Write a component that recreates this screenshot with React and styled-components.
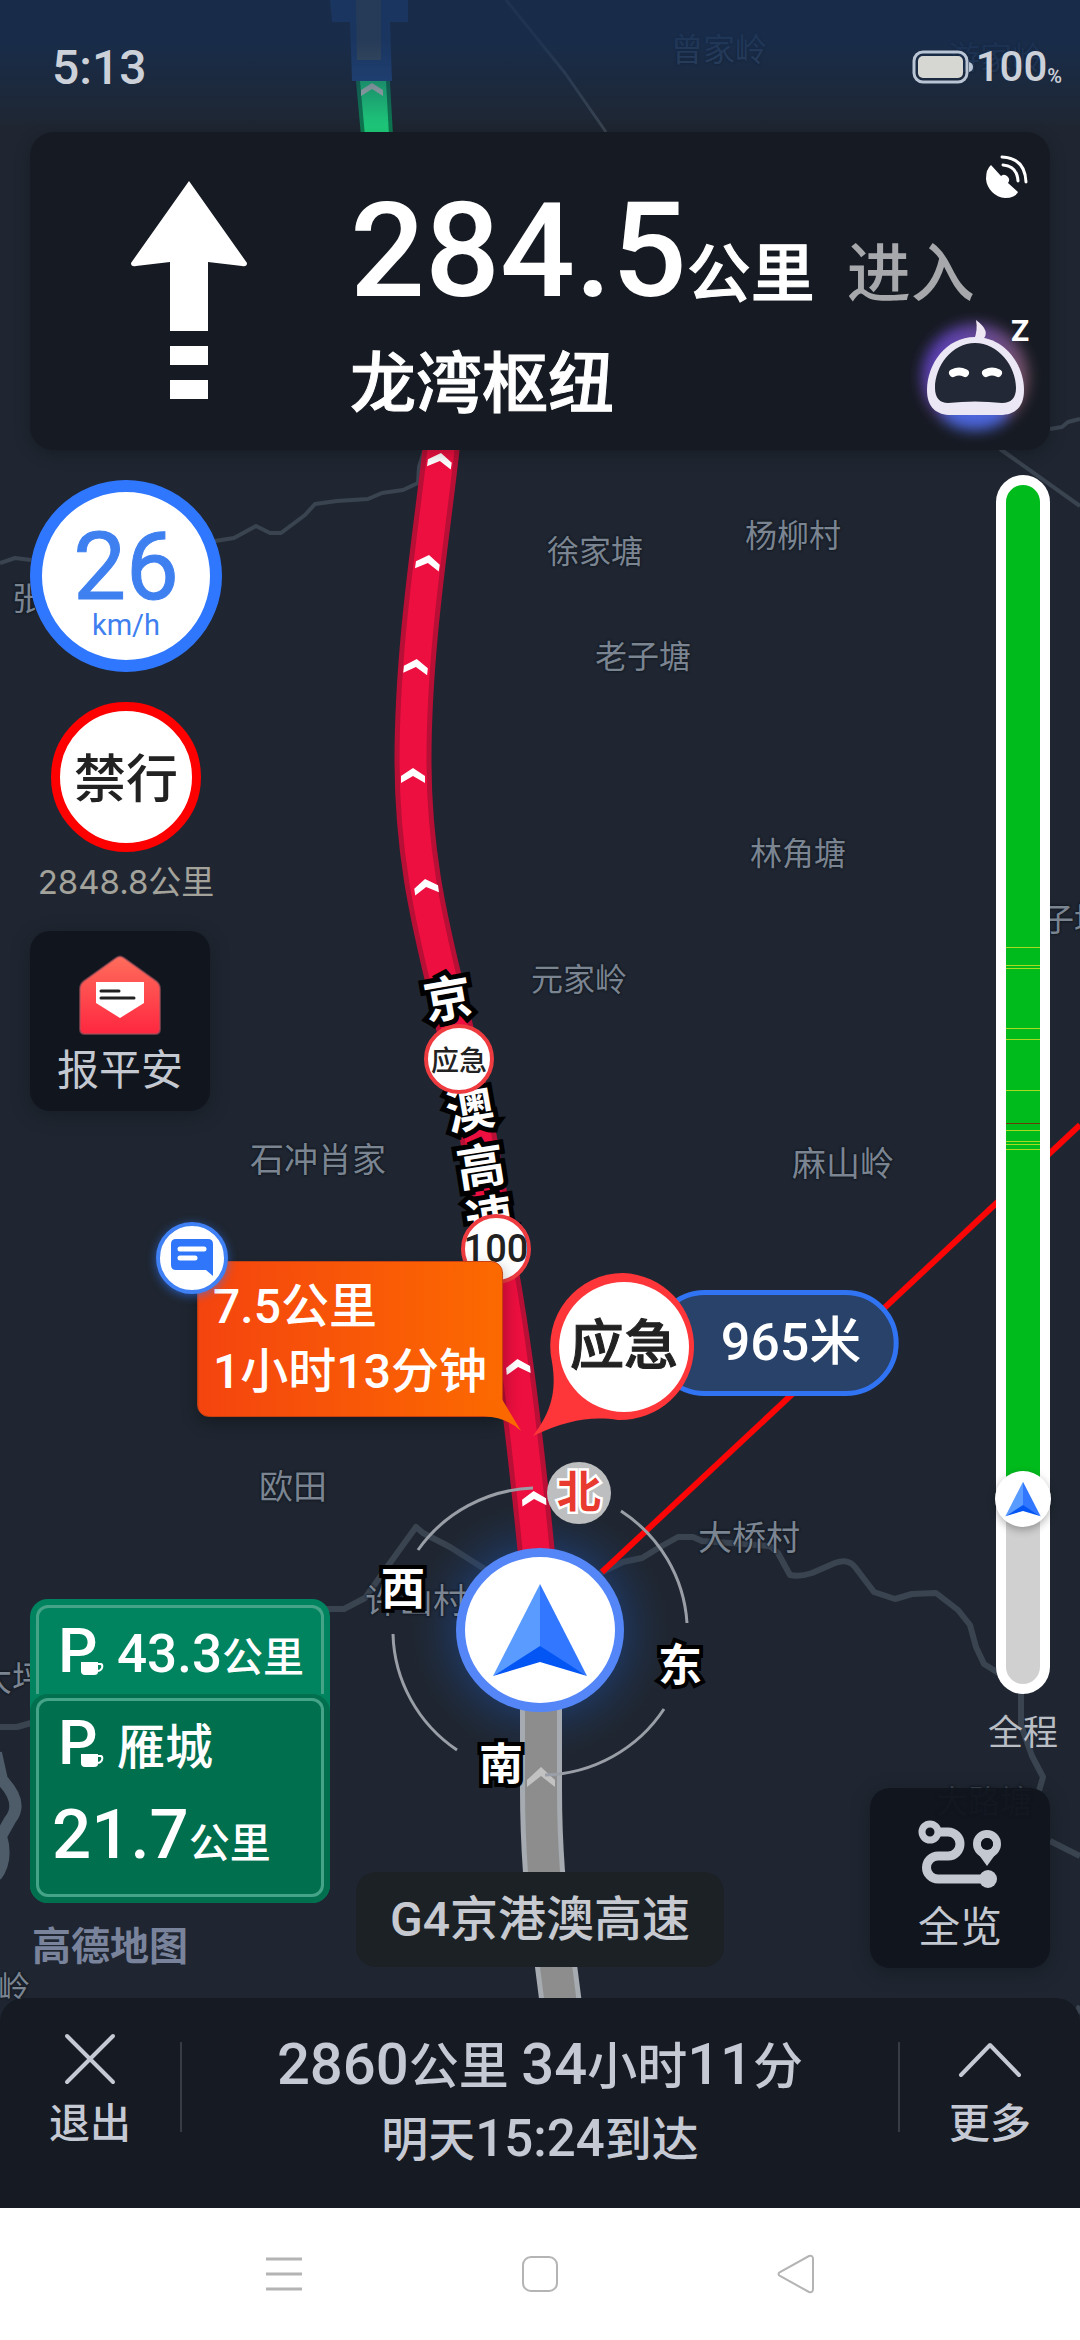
import React from "react"
import styled, { createGlobalStyle } from "styled-components"

const GlobalStyle = createGlobalStyle`
  * {
    box-sizing: border-box;
  }
  body {
    margin: 0;
    background: #fff;
    font-family: Roboto, "Noto Sans CJK SC", sans-serif;
    font-weight: 500;
  }
  button {
    border: 0;
    padding: 0;
    background: none;
    font: inherit;
    color: inherit;
    cursor: pointer;
  }
  svg {
    display: block;
  }
`

/* the map drawing is 1080 x 2208, pins are placed on it in the same units */
const MAP_W = 1080
const MAP_H = 2208

const Screen = styled.div`
  min-height: 100vh;
  display: flex;
  flex-direction: column;
`

const Navigator = styled.main`
  position: relative;
  flex: 1;
  display: flex;
  flex-direction: column;
  overflow: hidden;
  background: #1f2631;
`

const MapLayer = styled.div`
  position: absolute;
  inset: 0;
`

const MapDrawing = styled.svg`
  width: 100%;
  height: 100%;
`

const Pin = styled.div`
  position: absolute;
  left: ${props => (props.$x / MAP_W) * 100}%;
  top: ${props => (props.$y / MAP_H) * 100}%;
  transform: translate(-50%, -50%) rotate(${props => props.$turn || 0}deg);
  white-space: nowrap;
`

const Place = styled(Pin)`
  color: ${props => props.$color || "#7b8592"};
  font-size: ${props => (props.$big ? 34 : 32)}px;
  font-weight: 400;
  line-height: 40px;
  text-shadow: 0 0 3px #0f151e, 0 0 2px #0f151e;
`

const RoadLetter = styled(Pin)`
  color: #fff;
  font-size: 48px;
  line-height: 56px;
  font-weight: 700;
  -webkit-text-stroke: 10px #000;
  paint-order: stroke fill;
`

const CompassLetter = styled(Pin)`
  color: ${props => (props.$north ? "#e93a30" : "#fff")};
  font-size: 44px;
  line-height: 48px;
  font-weight: 700;
  -webkit-text-stroke: ${props => (props.$north ? "5px #fff" : "8px #000")};
  paint-order: stroke fill;
`

const RoadSign = styled(Pin)`
  width: 70px;
  height: 70px;
  display: flex;
  align-items: center;
  justify-content: center;
  border: 4px solid #ee3b40;
  border-radius: 50%;
  background: #fff;
  color: #222;
  font-size: ${props => props.$size}px;
`

const Callout = styled(Pin)`
  padding: 12px 15px;
  border: 1px solid #c7400f;
  border-radius: 12px;
  background: linear-gradient(90deg, #f4440f, #fc6900);
  box-shadow: 0 6px 16px rgba(0, 0, 0, 0.3);
  color: #fff;
  font-size: 48px;
  line-height: 65px;

  p {
    margin: 0;
  }
`

const CalloutTail = styled.svg`
  position: absolute;
  right: -20px;
  bottom: -16px;
`

const ChatBadge = styled(Pin)`
  width: 72px;
  height: 72px;
  display: flex;
  align-items: center;
  justify-content: center;
  border: 4px solid #3f80f5;
  border-radius: 50%;
  background: #fff;
  box-shadow: 0 2px 10px rgba(47, 118, 255, 0.6);
`

const DistancePill = styled(Pin)`
  padding: 15px 32px 15px 64px;
  border: 5px solid #3074f4;
  border-radius: 53px;
  background: #28426a;
  color: #fff;
  font-size: 52px;
  line-height: 66px;
`

const LaneText = styled(Pin)`
  color: #222;
  font-size: 54px;
  line-height: 60px;
  -webkit-text-stroke: 1px #222;
`

const StatusBar = styled.header`
  position: relative;
  height: 132px;
  padding: 2px 18px 0 52px;
  display: flex;
  align-items: center;
  justify-content: space-between;
  background: linear-gradient(rgba(22, 46, 82, 0.75) 30%, rgba(31, 38, 49, 0));
  color: #ccd1d9;
  font-size: 48px;
`

const Battery = styled.div`
  display: flex;
  align-items: center;
  gap: 2px;
  font-size: 42px;
  line-height: 42px;

  small {
    align-self: flex-end;
    margin-left: -2px;
    font-size: 20px;
    line-height: 24px;
  }
`

const TurnCard = styled.section`
  position: relative;
  margin: 0 30px;
  height: 318px;
  display: flex;
  border-radius: 24px;
  background: #161a22;
  box-shadow: 0 4px 16px rgba(0, 0, 0, 0.25);
  color: #fff;
`

const TurnArrow = styled.svg`
  margin: 49px 0 0 101px;
`

const TurnText = styled.div`
  flex: 1;
  padding: 39px 0 0 103px;
  white-space: nowrap;
`

const TurnDistance = styled.div`
  display: flex;
  align-items: baseline;
  font-size: 64px;
  font-weight: 500;
  line-height: 160px;
  -webkit-text-stroke: 1px #fff;

  strong {
    font-size: 132px;
    font-weight: 500;
    -webkit-text-stroke: 0;
  }

  span {
    margin-left: 32px;
    color: #a6a8ac;
    -webkit-text-stroke: 0;
  }
`

const TurnRoad = styled.div`
  font-size: 66px;
  font-weight: 500;
  line-height: 60px;
  -webkit-text-stroke: 1px #fff;
`

const CardTools = styled.div`
  position: absolute;
  top: 22px;
  right: 8px;
  display: flex;
  flex-direction: column;
  align-items: flex-end;
  gap: 100px;
`

const Panels = styled.div`
  position: relative;
  flex: 1;
  padding: 25px 30px 30px;
  display: grid;
  grid-template-columns: 1fr auto 1fr;
`

const LeftPanel = styled.div`
  padding-top: 5px;
  display: flex;
  flex-direction: column;
  align-items: flex-start;
`

const SpeedStack = styled.div`
  width: 192px;
  display: flex;
  flex-direction: column;
  align-items: center;
`

const Speed = styled.div`
  width: 192px;
  height: 192px;
  display: flex;
  flex-direction: column;
  align-items: center;
  justify-content: center;
  border: 12px solid #3077ff;
  border-radius: 50%;
  background: #fff;
  color: #3f80f0;
  font-size: 29px;
  font-weight: 400;
  line-height: 32px;

  b {
    padding-top: 14px;
    font-size: 94px;
    font-weight: 400;
    line-height: 84px;
    -webkit-text-stroke: 1px #3f80f0;
  }
`

const BanSign = styled.div`
  width: 150px;
  height: 150px;
  margin: 30px 0 10px;
  padding-bottom: 4px;
  display: flex;
  align-items: center;
  justify-content: center;
  border: 9px solid #fe0000;
  border-radius: 50%;
  background: #fff;
  color: #222;
  font-size: 52px;
`

const BanDistance = styled.div`
  color: #a3a39c;
  font-family: Inter, "Noto Sans CJK SC", sans-serif;
  font-size: 33px;
  font-weight: 400;
  line-height: 40px;
`

const ToolButton = styled.button`
  width: 180px;
  height: 180px;
  display: flex;
  flex-direction: column;
  align-items: center;
  justify-content: flex-end;
  padding-bottom: 10px;
  border-radius: 20px;
  background: rgba(15, 19, 28, 0.92);
  box-shadow: 0 4px 20px rgba(0, 0, 0, 0.25);
  color: #c4c8d0;
  font-size: 42px;
  font-weight: 400;
  line-height: 60px;
`

const HomeButton = styled(ToolButton).attrs({ type: "button" })`
  margin-top: 29px;
`

const ServiceSign = styled.div`
  width: 300px;
  margin-top: auto;
  border-radius: 18px;
  background: #008460;
  color: #fff;
`

const ServiceNext = styled.div`
  height: 95px;
  padding: 6px 6px 0;

  > div {
    height: 89px;
    padding: 8px 0 0 19px;
    border: 3px solid #45a487;
    border-bottom: 0;
    border-radius: 12px 12px 0 0;
  }
`

const ServiceNear = styled.div`
  padding: 4px 6px 6px;
  border-radius: 18px;
  background: #006f4e;

  > div {
    height: 199px;
    padding: 7px 0 0 13px;
    border: 3px solid #45a487;
    border-radius: 12px;
  }
`

const ServiceRow = styled.div`
  display: flex;
  align-items: baseline;
  padding-left: ${props => (props.$inset ? 6 : 0)}px;
  white-space: nowrap;
  font-size: ${props => props.$size || 41}px;
  line-height: ${props => props.$line || 70}px;

  b {
    font-size: ${props => props.$digits}px;
    font-weight: 500;
  }
`

const ParkingMark = styled.span`
  position: relative;
  width: 59px;
  font-size: 62px;
  line-height: 70px;

  svg {
    position: absolute;
    left: 23px;
    bottom: 10px;
  }
`

const MapBrand = styled.div`
  margin: 24px 0 0 2px;
  color: #7a839c;
  font-size: 39px;
  font-weight: 700;
  line-height: 41px;
`

const RoadName = styled.div`
  align-self: end;
  margin-bottom: 1px;
  padding: 0 34px;
  border-radius: 20px;
  background: #1c2126;
  color: #c6cad0;
  font-size: 48px;
  line-height: 95px;
  white-space: nowrap;
`

const RightPanel = styled.div`
  display: flex;
  flex-direction: column;
  align-items: flex-end;
`

const Route = styled.div`
  flex: 1;
  width: 54px;
  display: flex;
  flex-direction: column;
  align-items: center;
  color: #b9bdc4;
  font-size: 35px;
  font-weight: 400;
  line-height: 44px;
  white-space: nowrap;
`

const RouteTrack = styled.div`
  position: relative;
  flex: 1;
  width: 54px;
  margin-bottom: 18px;
  padding: 10px;
  border-radius: 27px;
  background: #fff;
`

const RouteFill = styled.div`
  position: relative;
  height: 100%;
  border-radius: 17px;
  overflow: hidden;
  background: linear-gradient(#00bb1c 84%, #d0d0d0 84%);
`

const RouteTick = styled.i`
  position: absolute;
  left: 0;
  right: 0;
  top: ${props => props.$at}%;
  height: 1px;
  background: ${props => (props.$jam ? "#6b3a08" : "#a9dc20")};
`

const RouteKnob = styled.div`
  position: absolute;
  left: 50%;
  top: 84%;
  width: 56px;
  height: 56px;
  transform: translate(-50%, -50%);
  display: flex;
  align-items: center;
  justify-content: center;
  border-radius: 50%;
  background: #fff;
  box-shadow: 0 3px 8px rgba(0, 0, 0, 0.3);
`

const OverviewButton = styled(ToolButton).attrs({ type: "button" })`
  margin-top: 32px;
`

const TripBar = styled.footer`
  position: relative;
  height: 210px;
  display: flex;
  align-items: flex-start;
  border-radius: 24px 24px 0 0;
  background: #161a22;
  color: #c5c9d3;
`

const TripButton = styled.button.attrs({ type: "button" })`
  width: 180px;
  height: 156px;
  padding-top: 30px;
  display: flex;
  flex-direction: column;
  align-items: center;
  justify-content: space-between;
  font-size: 41px;
  line-height: 60px;
`

const TripLine = styled.div`
  width: 2px;
  height: 90px;
  margin-top: 44px;
  background: #373b44;
`

const TripInfo = styled.div`
  flex: 1;
  padding-top: 30px;
  text-align: center;
  white-space: nowrap;
  font-size: 50px;

  p {
    margin: 0;
    line-height: 72px;
  }
  b {
    font-size: 58px;
    font-weight: 500;
  }
  p + p {
    font-size: 47px;
  }
  p + p b {
    font-size: 51px;
  }
`

const SystemBar = styled.nav`
  height: 132px;
  display: flex;
  align-items: center;
  justify-content: center;
  gap: 200px;
  background: #fff;

  button {
    width: 56px;
    height: 56px;
    display: flex;
    align-items: center;
    justify-content: center;
  }
`

const places = [
  { name: "曾家岭", x: 719, y: 50, color: "#3d4d64" },
  { name: "游家岭", x: 996, y: 58, color: "#2a3a51" },
  { name: "徐家塘", x: 595, y: 552 },
  { name: "杨柳村", x: 793, y: 536 },
  { name: "老子塘", x: 643, y: 657 },
  { name: "林角塘", x: 798, y: 854 },
  { name: "元家岭", x: 579, y: 980 },
  { name: "子塘", x: 1074, y: 920 },
  { name: "张", x: 28, y: 599 },
  { name: "石冲肖家", x: 318, y: 1160, big: true },
  { name: "麻山岭", x: 843, y: 1164, big: true },
  { name: "欧田", x: 293, y: 1487, big: true },
  { name: "大桥村", x: 749, y: 1538, big: true },
  { name: "许山村", x: 416, y: 1601, big: true },
  { name: "大坪", x: 12, y: 1679, big: true },
  { name: "岭", x: 14, y: 1988 },
  { name: "大路塘", x: 984, y: 1802, color: "#39424e" },
]

const roadLetters = [
  { char: "京", x: 448, y: 1000, turn: -10 },
  { char: "澳", x: 470, y: 1111, turn: -10 },
  { char: "高", x: 481, y: 1168, turn: -9 },
  { char: "速", x: 490, y: 1220, turn: -9 },
]

const arrows = [
  [440, 460, 8], [428, 562, 8], [416, 666, 6], [413, 775, 0],
  [426, 886, -8], [518, 1366, -5], [534, 1498, -3],
]

const ticks = [38.5, 40, 40.3, 45.3, 46.2, 50.5, 53.8, 54.7, 55, 55.4]

const NavArrow = ({ size }) => (
  <svg width={size} height={size} viewBox="0 0 96 96">
    <path d="M48 2 1 94 48 66Z" fill="#5a9bff" />
    <path d="M48 2 95 94 48 66Z" fill="#3277ff" />
    <path d="M1 94 48 64 95 94 48 80Z" fill="#0356f4" />
  </svg>
)

const MapArt = () => (
  <MapDrawing viewBox={`0 0 ${MAP_W} ${MAP_H}`} preserveAspectRatio="xMidYMid slice">
    <defs>
      <radialGradient id="glow">
        <stop offset="0.6" stopColor="#1d4689" stopOpacity="0.45" />
        <stop offset="1" stopColor="#1f2631" stopOpacity="0" />
      </radialGradient>
    </defs>
    <g fill="none" stroke="#3a4450" strokeWidth="6" strokeLinejoin="round">
      <path strokeWidth="4" d="M0 563 15 558 31 560M215 541 234 538 256 526 270 533 281 533 293 524 305 515 315 504 337 501 368 499 382 493 403 490 418 483 419 467 424 451" />
      <path strokeWidth="4" d="M1000 449 1080 506M1050 429 1062 427 1068 422 1080 419" />
      <path strokeWidth="3" d="M506 0 565 73 606 132" />
      <path d="M325 1609 344 1609 365 1598 390 1563 416 1527 423 1533 450 1547 483 1568 510 1590" />
      <path d="M590 1578 623 1562 642 1558 660 1547 678 1537 693 1537 702 1541 770 1546 778 1553 790 1575Q800 1577 812 1573L835 1563Q848 1558 855 1567L874 1592 895 1599 912 1594 936 1593 958 1610 970 1625 976 1647 984 1664 1000 1674 1021 1690V1725L1032 1756 1043 1777 1039 1791M1050 1841 1080 1856M1080 2006 1076 2014" />
      <path d="M0 1727H17L31 1723" />
      <path d="M-4 1753 2 1780Q24 1803 10 1820L1 1836Q8 1860-4 1876" strokeWidth="12" stroke="#4e5b69" />
    </g>
    {/* station on the far end of the road */}
    <path d="M330 0H408V22H390L392 81H352L350 22H332Z" fill="#254a86" />
    <path d="M356 0H381V60H357Z" fill="#54616a" />
    <path d="M356 81H390L393 136H361Z" fill="#0d7a50" />
    <path d="M360 81H386L389 136H365Z" fill="#1ed07c" />
    <path d="M372 83 383 90V96L372 89 361 96V90Z" fill="#b5c4bd" />
    <circle cx="540" cy="1630" r="136" fill="url(#glow)" />
    {/* road already driven */}
    <path d="M541 1690V1790Q541 1830 544 1872L561 2005" fill="none" stroke="#a5abb0" strokeWidth="42" />
    <path d="M541 1690V1790Q541 1830 544 1872L561 2005" fill="none" stroke="#8d8d8d" strokeWidth="32" />
    <path d="M541 1767 555 1780V1787L541 1776 527 1787V1780Z" fill="#c2c2c2" />
    {/* road ahead */}
    <path d="M442 440C434 520 413 640 413 760C413 860 432 930 446 990C462 1060 486 1160 500 1270Q520 1380 539 1580" fill="none" stroke="#b70f35" strokeWidth="37" />
    <path d="M442 440C434 520 413 640 413 760C413 860 432 930 446 990C462 1060 486 1160 500 1270Q520 1380 539 1580" fill="none" stroke="#ec0f3f" strokeWidth="27" />
    {arrows.map(([x, y, turn]) => (
      <path
        key={y}
        transform={`translate(${x} ${y}) rotate(${turn})`}
        d="M0-7 12 1V8L0 1-12 8V1Z"
        fill="#fff"
      />
    ))}
    <path d="M602 1572 1080 1125" stroke="#fb0606" strokeWidth="6" />
    {/* compass ring */}
    <g fill="none" stroke="#9a9ea6" strokeWidth="3">
      <path d="M418 1550A147 145 0 0 1 533 1488" />
      <path d="M621 1511A147 145 0 0 1 687 1623" />
      <path d="M664 1709A147 145 0 0 1 545 1775" />
      <path d="M457 1750A147 145 0 0 1 393 1634" />
    </g>
  </MapDrawing>
)

const PositionMark = styled(Pin)`
  width: 168px;
  height: 164px;
  display: flex;
  align-items: center;
  justify-content: center;
  border: 9px solid #5486f8;
  border-radius: 50%;
  background: #fff;
`

const NorthDisc = styled(Pin)`
  width: 64px;
  height: 62px;
  border-radius: 50%;
  background: #bcbebf;
`

const Parking = () => (
  <ParkingMark>
    P
    <svg width="24" height="14" viewBox="0 0 24 14">
      <path d="M0 0H17V10Q17 13 13 13H4Q0 13 0 9Z" fill="#fff" />
      <path d="M16 2H20Q22 3 21 6 20 9 16 9" fill="none" stroke="#fff" strokeWidth="2" />
    </svg>
  </ParkingMark>
)

const App = () => (
  <Screen>
    <GlobalStyle />
    <Navigator>
      <MapLayer>
        <MapArt />
        {places.map(place => (
          <Place key={place.name} $x={place.x} $y={place.y} $big={place.big} $color={place.color}>
            {place.name}
          </Place>
        ))}
        {roadLetters.map(letter => (
          <RoadLetter key={letter.char} $x={letter.x} $y={letter.y} $turn={letter.turn}>
            {letter.char}
          </RoadLetter>
        ))}
        <RoadSign $x={459} $y={1059} $size={28}>应急</RoadSign>
        <RoadSign $x={496} $y={1249} $size={38}>100</RoadSign>
        <Callout $x={350} $y={1339}>
          <p>7.5公里</p>
          <p>1小时13分钟</p>
          <CalloutTail width="38" height="36" viewBox="0 0 38 36">
            <path d="M16 0 37 35Q24 22 0 20L6 8Z" fill="#fb6800" />
          </CalloutTail>
        </Callout>
        <ChatBadge $x={192} $y={1258}>
          <svg width="44" height="38" viewBox="0 0 44 38">
            <path d="M6 0H38Q43 0 43 5V37L36 31H6Q1 31 1 26V5Q1 0 6 0Z" fill="#2f76fa" />
            <path d="M10 10H34M10 19H25" stroke="#fff" strokeWidth="5" strokeLinecap="round" />
          </svg>
        </ChatBadge>
        <DistancePill $x={775} $y={1343}>965米</DistancePill>
        <Pin $x={616} $y={1355}>
          <svg width="170" height="166" viewBox="0 0 170 166">
            <path d="M92 1A73 73 0 1 1 87 148C60 144 36 148 2 164 20 140 26 120 21 90A73 73 0 0 1 92 1Z" fill="#fe3539" />
            <circle cx="93" cy="75" r="65" fill="#fff" />
          </svg>
        </Pin>
        <LaneText $x={624} $y={1347}>应急</LaneText>
        <PositionMark $x={540} $y={1630}>
          <NavArrow size={96} />
        </PositionMark>
        <NorthDisc $x={579} $y={1493} />
        <CompassLetter $north $x={579} $y={1493}>北</CompassLetter>
        <CompassLetter $x={680} $y={1666}>东</CompassLetter>
        <CompassLetter $x={501} $y={1765}>南</CompassLetter>
        <CompassLetter $x={403} $y={1590}>西</CompassLetter>
      </MapLayer>

      <StatusBar>
        <span>5:13</span>
        <Battery>
          <svg width="62" height="34" viewBox="0 0 62 34">
            <rect x="2" y="2" width="53" height="30" rx="9" fill="none" stroke="#b9c4d4" strokeWidth="3" />
            <rect x="6" y="6" width="45" height="22" rx="5" fill="#d6d6d2" />
            <path d="M57 12Q61 13 61 17T57 22Z" fill="#b9c4d4" />
          </svg>
          100<small>%</small>
        </Battery>
      </StatusBar>

      <TurnCard>
        <TurnArrow width="116" height="218" viewBox="0 0 116 218">
          <path d="M58 0 116 82Q116 86 111 85L77 81V150H39V81L5 85Q0 86 0 82ZM39 165H77V184H39ZM39 199H77V218H39Z" fill="#fff" />
        </TurnArrow>
        <TurnText>
          <TurnDistance>
            <strong>284.5</strong>公里<span>进入</span>
          </TurnDistance>
          <TurnRoad>龙湾枢纽</TurnRoad>
        </TurnText>
        <CardTools>
          <svg width="60" height="48" viewBox="0 0 60 48">
            <path d="M9 11 19 22A5 5 0 0 1 26 29L36 38Q33 44 23 44A21 21 0 0 1 4 25Q4 15 9 11Z" fill="#fff" />
            <path d="M21 11Q35 12 36 27M20 3Q43 4 44 28" fill="none" stroke="#fff" strokeWidth="3" strokeLinecap="round" />
          </svg>
          <svg width="142" height="150" viewBox="0 0 142 150">
            <defs>
              <linearGradient id="halo" x1="0" y1="0.3" x2="0.9" y2="0.7">
                <stop offset="0" stopColor="#5a3fc0" />
                <stop offset="1" stopColor="#7a5566" />
              </linearGradient>
              <filter id="soft" x="-30%" y="-30%" width="160%" height="160%">
                <feGaussianBlur stdDeviation="7" />
              </filter>
            </defs>
            <g filter="url(#soft)">
              <circle cx="75" cy="75" r="53" fill="url(#halo)" />
              <ellipse cx="75" cy="112" rx="32" ry="16" fill="#4d66dd" />
            </g>
            <path d="M74 38Q78 28 76 18 92 30 82 38Z" fill="#efe6f3" />
            <path d="M75 35C104 35 124 62 124 88 124 106 114 113 100 113H51C37 113 27 106 27 88 27 62 46 35 75 35Z" fill="#ece7f5" />
            <path d="M75 41C98 41 116 64 116 86 116 96 111 101 102 101 84 99 66 99 48 101 40 101 35 96 35 86 35 64 52 41 75 41Z" fill="#222835" />
            <path d="M53 71Q59 68 65 71M86 71Q92 68 98 71" fill="none" stroke="#fff" strokeWidth="8" strokeLinecap="round" />
            <text x="111" y="39" fill="#fff" fontSize="30" fontWeight="700">Z</text>
          </svg>
        </CardTools>
      </TurnCard>

      <Panels>
        <LeftPanel>
          <SpeedStack>
            <Speed>
              <b>26</b>
              km/h
            </Speed>
            <BanSign>禁行</BanSign>
            <BanDistance>2848.8公里</BanDistance>
          </SpeedStack>
          <HomeButton>
            <svg width="88" height="86" viewBox="0 0 88 86">
              <defs>
                <linearGradient id="mail" x1="0" y1="0" x2="0" y2="1">
                  <stop offset="0" stopColor="#ff6d5c" />
                  <stop offset="1" stopColor="#ff2740" />
                </linearGradient>
              </defs>
              <path d="M40 3Q44 0 48 3L80 26Q84 29 84 34V74Q84 79 79 79H9Q4 79 4 74V34Q4 29 8 26Z" fill="url(#mail)" stroke="#a3505c" strokeOpacity="0.6" strokeWidth="2" />
              <path d="M20 27H68V48L44 63 20 48Z" fill="#fff" />
              <path d="M25 36H43M25 43H58" stroke="#222" strokeWidth="3" strokeLinecap="round" />
            </svg>
            报平安
          </HomeButton>
          <ServiceSign>
            <ServiceNext>
              <div>
                <ServiceRow $digits={53}>
                  <Parking />
                  <b>43.3</b>公里
                </ServiceRow>
              </div>
            </ServiceNext>
            <ServiceNear>
              <div>
                <ServiceRow $inset $size={48}>
                  <Parking />
                  雁城
                </ServiceRow>
                <ServiceRow $digits={69} $line={104}>
                  <b>21.7</b>公里
                </ServiceRow>
              </div>
            </ServiceNear>
          </ServiceSign>
          <MapBrand>高德地图</MapBrand>
        </LeftPanel>

        <RoadName>G4京港澳高速</RoadName>

        <RightPanel>
          <Route>
            <RouteTrack>
              <RouteFill>
                {ticks.map(at => (
                  <RouteTick key={at} $at={at} />
                ))}
                <RouteTick $at={53.2} $jam />
              </RouteFill>
              <RouteKnob>
                <NavArrow size={36} />
              </RouteKnob>
            </RouteTrack>
            全程
          </Route>
          <OverviewButton>
            <svg width="84" height="80" viewBox="0 0 84 80">
              <g fill="none" stroke="#c4c8d0" strokeWidth="9">
                <circle cx="12" cy="14" r="8" strokeWidth="7" />
                <path d="M20 14H30A12 12 0 0 1 30 38H20A11 11 0 0 0 20 61H70" />
                <circle cx="69" cy="26" r="10" strokeWidth="8" />
              </g>
              <path d="M56 30 69 48 82 30Z" fill="#c4c8d0" />
              <circle cx="69" cy="26" r="6" fill="#0f131c" />
              <circle cx="70" cy="61" r="9" fill="#c4c8d0" />
            </svg>
            全览
          </OverviewButton>
        </RightPanel>
      </Panels>

      <TripBar>
        <TripButton>
          <svg width="52" height="60" viewBox="0 0 52 60">
            <path d="M3 8 49 54M49 8 3 54" stroke="#c5c9d3" strokeWidth="4" strokeLinecap="round" />
          </svg>
          退出
        </TripButton>
        <TripLine />
        <TripInfo>
          <p><b>2860</b>公里 <b>34</b>小时<b>11</b>分</p>
          <p>明天<b>15:24</b>到达</p>
        </TripInfo>
        <TripLine />
        <TripButton>
          <svg width="64" height="60" viewBox="0 0 64 60">
            <path d="M3 47 32 17 61 47" fill="none" stroke="#c5c9d3" strokeWidth="4" strokeLinecap="round" strokeLinejoin="round" />
          </svg>
          更多
        </TripButton>
      </TripBar>
    </Navigator>

    <SystemBar>
      <button type="button" aria-label="菜单">
        <svg width="36" height="36" viewBox="0 0 36 36">
          <path d="M0 3H36M0 18H36M0 33H36" stroke="#b4b4b4" strokeWidth="3" />
        </svg>
      </button>
      <button type="button" aria-label="主页">
        <svg width="36" height="36" viewBox="0 0 36 36">
          <rect x="1" y="1" width="34" height="34" rx="8" fill="none" stroke="#b4b4b4" strokeWidth="2" />
        </svg>
      </button>
      <button type="button" aria-label="返回">
        <svg width="38" height="40" viewBox="0 0 38 40">
          <path d="M32 2Q36 1 36 5V35Q36 39 32 38L3 22Q0 20 3 18Z" fill="none" stroke="#b4b4b4" strokeWidth="2" />
        </svg>
      </button>
    </SystemBar>
  </Screen>
)

export default App
